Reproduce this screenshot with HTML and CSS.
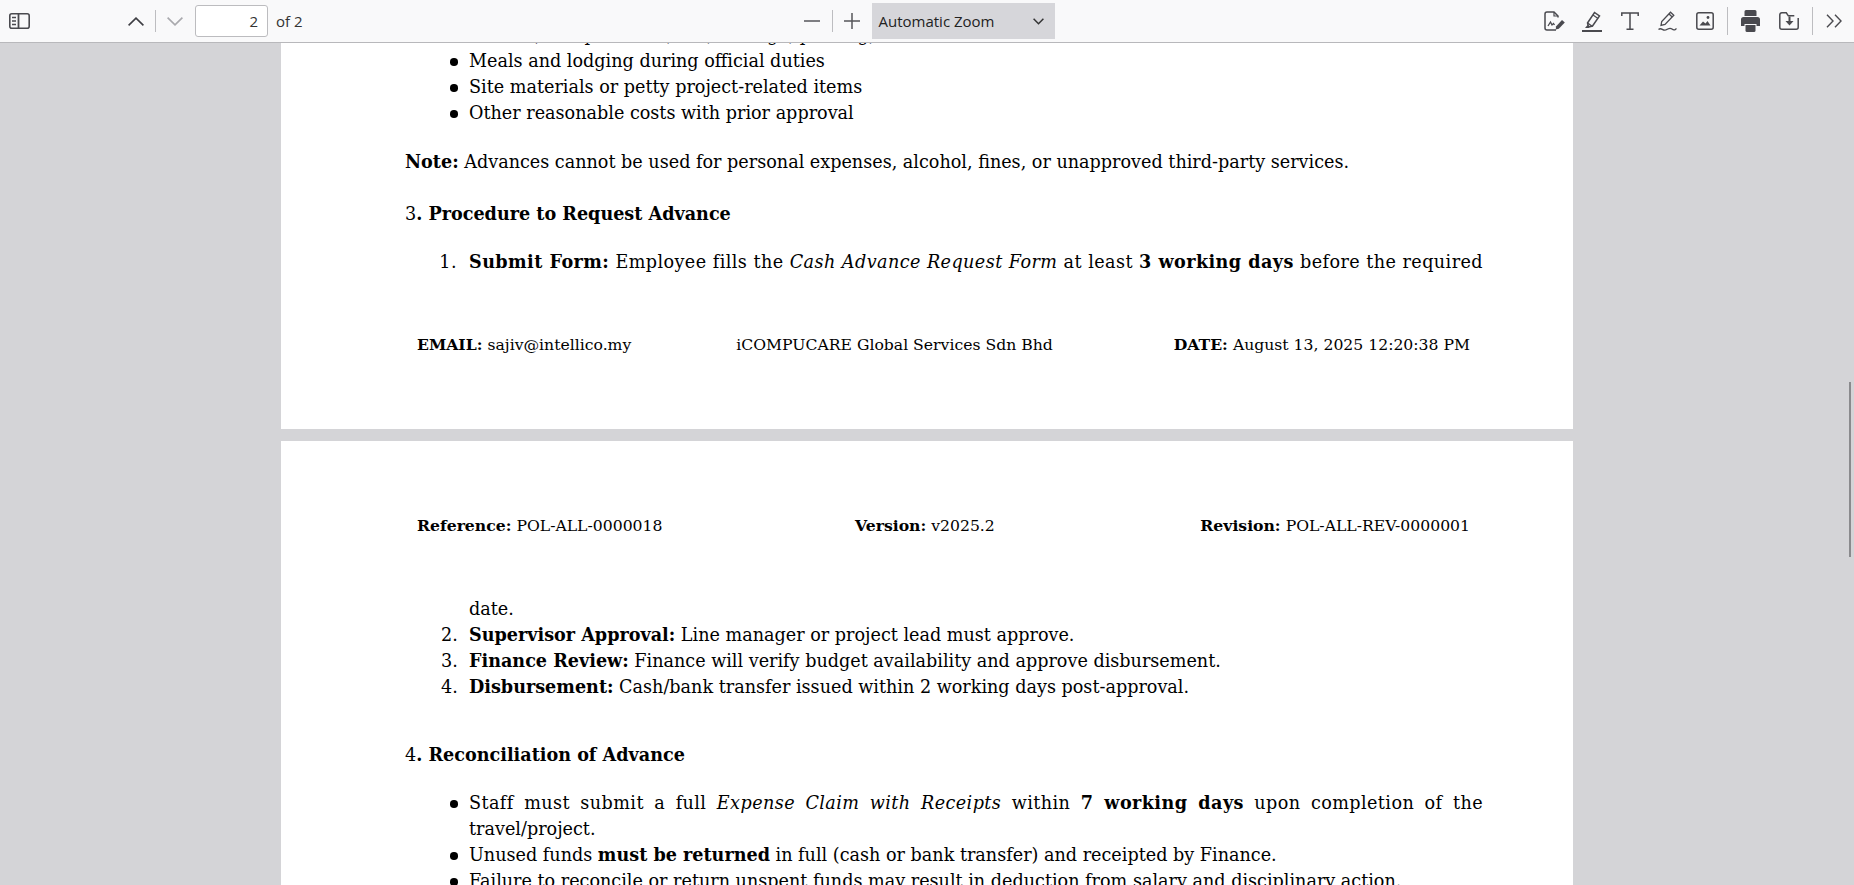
FILE: index.html
```html
<!DOCTYPE html>
<html lang="en">
<head>
<meta charset="utf-8">
<title>Policy PDF</title>
<link rel="stylesheet" href="styles.css">
</head>
<body>
<div class="toolbar">
  <div class="tb-left">
    <button class="icon side"><svg width="21" height="16" viewBox="0 0 21 16" fill="none" stroke="#4a4a4f" stroke-width="1.6"><rect x="0.8" y="0.8" width="19.4" height="14.4" rx="2"/><path d="M9.5 1v14" stroke-width="1.8"/><path d="M3 4.500h4M3 8h4M3 11.500h4" stroke-width="1.5"/></svg></button>
    <div class="pager">
      <svg width="16" height="9" viewBox="0 0 16 9" fill="none" stroke="#3e3e43" stroke-width="1.6"><path d="M.6 8.400L8 1.100l7.400 7.300"/></svg>
      <span class="sep"></span>
      <svg width="16" height="9" viewBox="0 0 16 9" fill="none" stroke="#a9a9ad" stroke-width="1.600"><path d="M.6.600L8 7.900 15.400.600"/></svg>
      <div class="page-input">2</div>
      <span class="of">of 2</span>
    </div>
  </div>
  <div class="tb-mid">
    <svg width="16" height="2" viewBox="0 0 16 2"><path d="M0 1h16" stroke="#55555a" stroke-width="1.500"/></svg>
    <span class="sep"></span>
    <svg width="16" height="16" viewBox="0 0 16 16"><path d="M0 8h16M8 0v16" stroke="#55555a" stroke-width="1.500"/></svg>
    <div class="zoom-select"><span>Automatic Zoom</span><svg width="11" height="7" viewBox="0 0 11 7" fill="none" stroke="#333" stroke-width="1.500"><path d="M.6.800l4.900 4.900L10.400.800"/></svg></div>
  </div>
  <div class="tb-right">
    <svg class="tight" width="21" height="20" viewBox="0 0 21 20" fill="none" stroke="#4a4a4f" stroke-width="1.500"><path d="M12 19H3a2 2 0 0 1-2-2V3a2 2 0 0 1 2-2h7l4 4v1.500"/><path d="M10 1v4h4" stroke-width="1.200"/><path d="M4 15l2.500-4 1.500 3 1.500-1.500 1 1.500" stroke-width="1.300"/><path d="M12 15.500l6-6.500 2.800 2.500-6 6.300-3 .7z" fill="#4a4a4f" stroke="none"/></svg>
    <svg width="20" height="21" viewBox="0 0 20 21" fill="none" stroke="#4a4a4f" stroke-width="1.500"><path d="M5.500 12L12.500 1.500 17.500 5 10.500 15l-4 1z"/><path d="M5.500 12l5 3.500"/><path d="M11 4l5 3.500" stroke-width="1.200"/><path d="M3 17l2.500-3 2 1.500-1 1.500z" fill="#4a4a4f" stroke="none"/><path d="M0 20h20" stroke-width="2"/></svg>
    <svg width="18" height="18" viewBox="0 0 18 18" fill="none" stroke="#4a4a4f" stroke-width="1.500"><path d="M.8 4V1h16.400v3M9 1v16M5.500 17.200h7"/></svg>
    <svg width="19" height="21" viewBox="0 0 19 21" fill="none" stroke="#4a4a4f" stroke-width="1.300"><path d="M3 14.500l.7-4L12.500 1.200l3.300 3L7 13.500z"/><path d="M11 3l3.300 3" /><path d="M.5 18.500c3-2.500 4 1.500 7 .5s4-3 6.500-1 3 .5 4.500-.5"/></svg>
    <svg width="18" height="18" viewBox="0 0 18 18" fill="none" stroke="#4a4a4f" stroke-width="1.500"><rect x=".8" y=".8" width="16.400" height="16.400" rx="2"/><path d="M3.500 13.500l3.500-4 2.500 2 2-2.500 3 4.500z" fill="#4a4a4f" stroke="none"/><circle cx="12" cy="5.500" r="1.400" fill="#4a4a4f" stroke="none"/></svg>
    <span class="sep"></span>
    <svg width="19" height="22" viewBox="0 0 19 22" fill="#4a4a4f"><path d="M5 0h9a1.500 1.500 0 0 1 1.500 1.500V6h-12V1.500A1.500 1.500 0 0 1 5 0z"/><path d="M2.500 7h14A2.500 2.500 0 0 1 19 9.500V16h-3.500v-2h-12v2H0V9.500A2.500 2.500 0 0 1 2.500 7z"/><path d="M4.500 15h10v5.500a1.500 1.500 0 0 1-1.500 1.500H6a1.500 1.500 0 0 1-1.500-1.500z"/></svg>
    <svg width="20" height="18" viewBox="0 0 20 18" fill="none" stroke="#4a4a4f" stroke-width="1.500"><path d="M19.200 6v9.200a2 2 0 0 1-2 2H2.800a2 2 0 0 1-2-2V2.800a2 2 0 0 1 2-2h4.500l2 3h6"/><path d="M10.500 4.500v6" stroke-width="2"/><path d="M6.500 9h8l-4 4.500z" fill="#4a4a4f" stroke="none"/></svg>
    <span class="sep"></span>
    <svg width="16" height="14" viewBox="0 0 16 14" fill="none" stroke="#4a4a4f" stroke-width="1.400"><path d="M1 .8L7 7l-6 6.200M9 .8L15 7l-6 6.200"/></svg>
  </div>
</div>

<div class="viewer">
  <div class="scroll-thumb"></div>
  <section class="sheet first">
    <div class="body-text">
      <ul class="bullets clip-start">
        <li>Travel (transportation, toll, mileage, parking)</li>
        <li>Meals and lodging during official duties</li>
        <li>Site materials or petty project-related items</li>
        <li>Other reasonable costs with prior approval</li>
      </ul>
      <p class="note"><b>Note:</b> Advances cannot be used for personal expenses, alcohol, fines, or unapproved third-party services.</p>
      <p class="head">3<b>. Procedure to Request Advance</b></p>
      <ol class="steps">
        <li class="just spaced"><b>Submit Form:</b> Employee fills the <i>Cash Advance Request Form</i> at least <b>3 working days</b> before the required</li>
      </ol>
    </div>
    <div class="meta foot">
      <span><b>EMAIL:</b> sajiv@intellico.my</span>
      <span class="mid-foot">iCOMPUCARE Global Services Sdn Bhd</span>
      <span><b>DATE:</b> August 13, 2025 12:20:38 PM</span>
    </div>
  </section>
  <section class="sheet second">
    <div class="meta top">
      <span><b>Reference:</b> POL-ALL-0000018</span>
      <span class="mid-top"><b>Version:</b> v2025.2</span>
      <span><b>Revision:</b> POL-ALL-REV-0000001</span>
    </div>
    <div class="body-text">
      <ol class="steps cont">
        <li class="nomark">date.</li>
        <li><b>Supervisor Approval:</b> Line manager or project lead must approve.</li>
        <li><b>Finance Review:</b> Finance will verify budget availability and approve disbursement.</li>
        <li><b>Disbursement:</b> Cash/bank transfer issued within 2 working days post-approval.</li>
      </ol>
      <p class="head h4">4<b>. Reconciliation of Advance</b></p>
      <ul class="bullets recon">
        <li class="justify"><span class="spaced">Staff must submit a full <i>Expense Claim with Receipts</i> within <b>7 working days</b> upon completion of the</span> travel/project.</li>
        <li>Unused funds <b>must be returned</b> in full (cash or bank transfer) and receipted by Finance.</li>
        <li>Failure to reconcile or return unspent funds may result in deduction from salary and disciplinary action.</li>
      </ul>
    </div>
  </section>
</div>
</body>
</html>
```
FILE: styles.css
```css
* { box-sizing: border-box; }
html, body { margin: 0; height: 100%; overflow: hidden; }
body { background: #d4d4d7; font-family: "DejaVu Serif", serif; color: #000; }

.toolbar {
  height: 43px;
  background: #f9f9fa;
  border-bottom: 1px solid #b8b8bb;
  display: grid;
  grid-template-columns: 1fr auto 1fr;
  align-items: center;
  font-family: "Open Sans", "Noto Sans", sans-serif;
  position: relative;
  z-index: 2;
}
.tb-left { display: flex; align-items: center; }
.icon { background: none; border: 0; padding: 0; display: flex; }
.side { margin-left: 9px; }
.pager { display: flex; align-items: center; margin-left: 98px; }
.sep { display: block; width: 1px; height: 22px; background: #bdbdc0; }
.pager .sep { margin: 0 11px; }
.page-input {
  width: 73px; height: 32px; margin-left: 12px;
  background: #fff; border: 1px solid #bcbcbf; border-radius: 3px;
  text-align: right; padding: 0 9px; line-height: 30px;
  font-size: 15px; color: #333;
}
.of { font-size: 15px; color: #333; margin-left: 8px; }
.tb-mid { display: flex; align-items: center; gap: 12px; margin-left: 4px; }
.tb-mid .sep { margin-right: -1px; }
.zoom-select {
  width: 183px; height: 36px; background: #d6d6da;
  display: flex; align-items: center; justify-content: space-between;
  padding: 0 11px 0 7px; font-size: 15px; color: #222;
}
.tb-right { display: flex; align-items: center; justify-content: flex-end; gap: 19px; padding-right: 12px; }
.tb-right .sep { margin: 0 -6px; height: 28px; }
.tb-right .tight { margin-right: -2px; }

.viewer { position: relative; height: 842px; overflow: hidden; }
.scroll-thumb { position: absolute; right: 3px; top: 339px; width: 2px; height: 175px; background: #8a8a8d; }

.sheet { width: 1292px; margin: 0 auto; background: #fff; }
.first { height: 386px; overflow: hidden; }
.second { margin-top: 12px; height: 600px; }
.body-text { padding: 0 90px 0 124px; font-size: 17.6px; line-height: 26px; }
ul, ol { margin: 0; padding-left: 64px; }
p { margin: 0; }
.bullets { list-style: none; }
.bullets li { position: relative; }
.bullets li::before {
  content: ""; position: absolute; left: -19px; top: 10px;
  width: 7.5px; height: 7.5px; border-radius: 50%; background: #000;
}
.clip-start { margin-top: -21px; }
.note { margin-top: 23px; }
.head { margin-top: 26px; }
.steps { margin-top: 22px; }
.steps li::marker { content: counter(list-item) ".\00a0\00a0"; }
.just { text-align: justify; text-align-last: justify; }
.justify { text-align: justify; }
.spaced { letter-spacing: 0.42px; }
.steps .nomark { list-style: none; }
.steps .nomark::marker { content: none; }
.cont { margin-top: 0; }
.h4 { margin-top: 42px; }
.recon { margin-top: 22px; }

.meta { display: flex; justify-content: space-between; font-size: 15.65px; line-height: 22px; padding: 0 103px 0 136px; }
.foot { margin-top: 59px; }
.mid-foot { margin-right: 16px; }
.mid-top { margin-right: 13px; }
.top { padding-top: 74px; margin-bottom: 59px; }
```
